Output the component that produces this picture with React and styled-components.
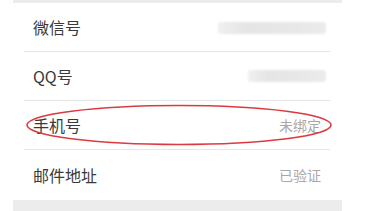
import React from "react";
import styled, { createGlobalStyle } from "styled-components";

const Global = createGlobalStyle`
  html, body {
    margin: 0;
    padding: 0;
    background: #ffffff;
    font-family: "Noto Sans CJK SC", "Noto Sans", sans-serif;
  }
`;

const Page = styled.div`
  width: 329px;
  margin-left: 13px;
  height: 211px;
  display: flex;
  flex-direction: column;
  background: #ffffff;
`;

const Band = styled.div`
  height: ${(p) => p.h}px;
  background: #ececec;
  flex-shrink: 0;
`;

const List = styled.div`
  padding: 0 12px 0 11px;
  position: relative;
`;

const Row = styled.div`
  height: ${(p) => (p.last ? 50 : 48)}px;
  display: flex;
  align-items: center;
  justify-content: space-between;
  padding: 0 8px 0 9px;
  border-bottom: ${(p) => (p.last ? "none" : "1px solid #e6e6e6")};
  position: relative;
`;

const Label = styled.span`
  font-size: 16px;
  color: #3a3a3a;
`;

const Value = styled.span`
  font-size: 14px;
  color: #a8a8a8;
  margin-right: 1px;
`;

const Blur = styled.div`
  width: ${(p) => p.w}px;
  height: 12px;
  margin-right: -4px;
  margin-top: ${(p) => p.mt || 0}px;
  background: linear-gradient(90deg, #f0f0f0 0%, #e5e5e5 25%, #e8e8e8 70%, #ebebeb 100%);
  filter: blur(1.2px);
  border-radius: 3px;
`;

const Mark = styled.svg`
  position: absolute;
  left: 2px;
  top: 4px;
  overflow: visible;
  pointer-events: none;
`;

export default function App() {
  return (
    <>
      <Global />
      <Page>
        <Band h={3} />
        <List>
          <Row>
            <Label>微信号</Label>
            <Blur w={108} mt={2} />
          </Row>
          <Row>
            <Label>QQ号</Label>
            <Blur w={78} />
          </Row>
          <Row>
            <Label>手机号</Label>
            <Value>未绑定</Value>
            <Mark width="306" height="40" viewBox="0 0 306 40">
              <ellipse
                cx="153"
                cy="20"
                rx="152"
                ry="19.5"
                fill="none"
                stroke="#dc3a40"
                strokeWidth="1.6"
              />
            </Mark>
          </Row>
          <Row last>
            <Label>邮件地址</Label>
            <Value>已验证</Value>
          </Row>
        </List>
        <Band h={11} />
      </Page>
    </>
  );
}
